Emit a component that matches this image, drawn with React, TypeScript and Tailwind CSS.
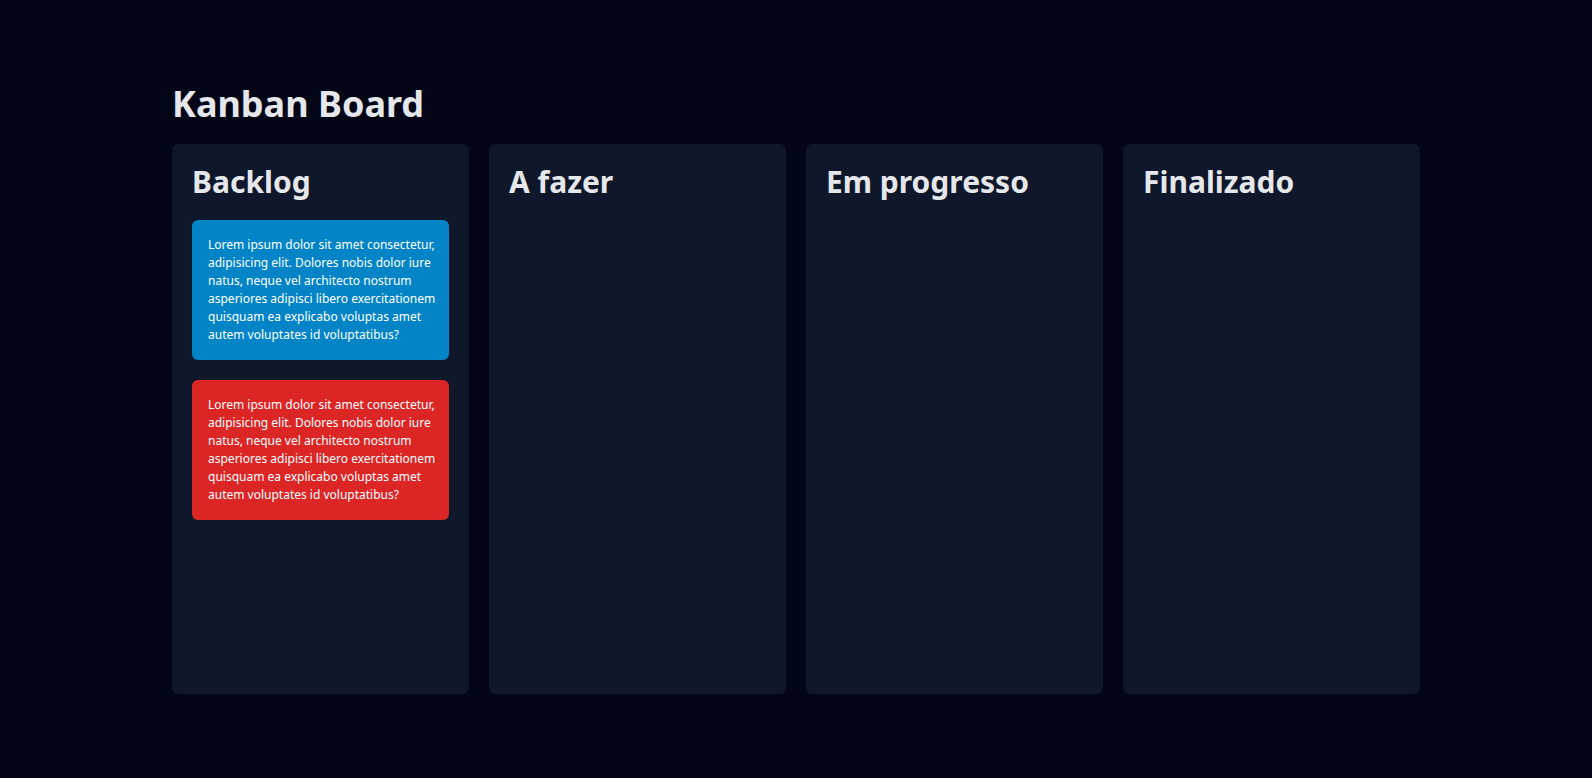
import React from "react";

const text =
  "Lorem ipsum dolor sit amet consectetur, adipisicing elit. Dolores nobis dolor iure natus, neque vel architecto nostrum asperiores adipisci libero exercitationem quisquam ea explicabo voluptas amet autem voluptates id voluptatibus?";

const lines = [
  "Lorem ipsum dolor sit amet consectetur,",
  "adipisicing elit. Dolores nobis dolor iure",
  "natus, neque vel architecto nostrum",
  "asperiores adipisci libero exercitationem",
  "quisquam ea explicabo voluptas amet",
  "autem voluptates id voluptatibus?",
];

function Card({ color }: { color: string }) {
  return (
    <div className={`${color} rounded-md p-4 text-xs leading-[18px] text-white`} title={text}>
      {lines.map((l, i) => (
        <div key={i} className="whitespace-nowrap">
          {l}
        </div>
      ))}
    </div>
  );
}

function Column({ title, children }: { title: string; children?: React.ReactNode }) {
  return (
    <div className="flex h-[550px] flex-col gap-5 rounded-md bg-[#0f172a] p-5">
      <h2 className="text-3xl font-bold text-[#e5e7eb]">{title}</h2>
      {children}
    </div>
  );
}

export default function App() {
  return (
    <div
      className="flex min-h-screen items-center bg-[#020617]"
      style={{ fontFamily: '"Noto Sans", "Open Sans", sans-serif' }}
    >
      <div className="mx-auto w-full max-w-7xl px-4">
        <h1 className="mb-5 text-4xl font-bold text-[#e5e7eb]">Kanban Board</h1>
        <div className="grid grid-cols-4 gap-5">
          <Column title="Backlog">
            <Card color="bg-[#0284c7]" />
            <Card color="bg-[#dc2626]" />
          </Column>
          <Column title="A fazer" />
          <Column title="Em progresso" />
          <Column title="Finalizado" />
        </div>
      </div>
    </div>
  );
}
